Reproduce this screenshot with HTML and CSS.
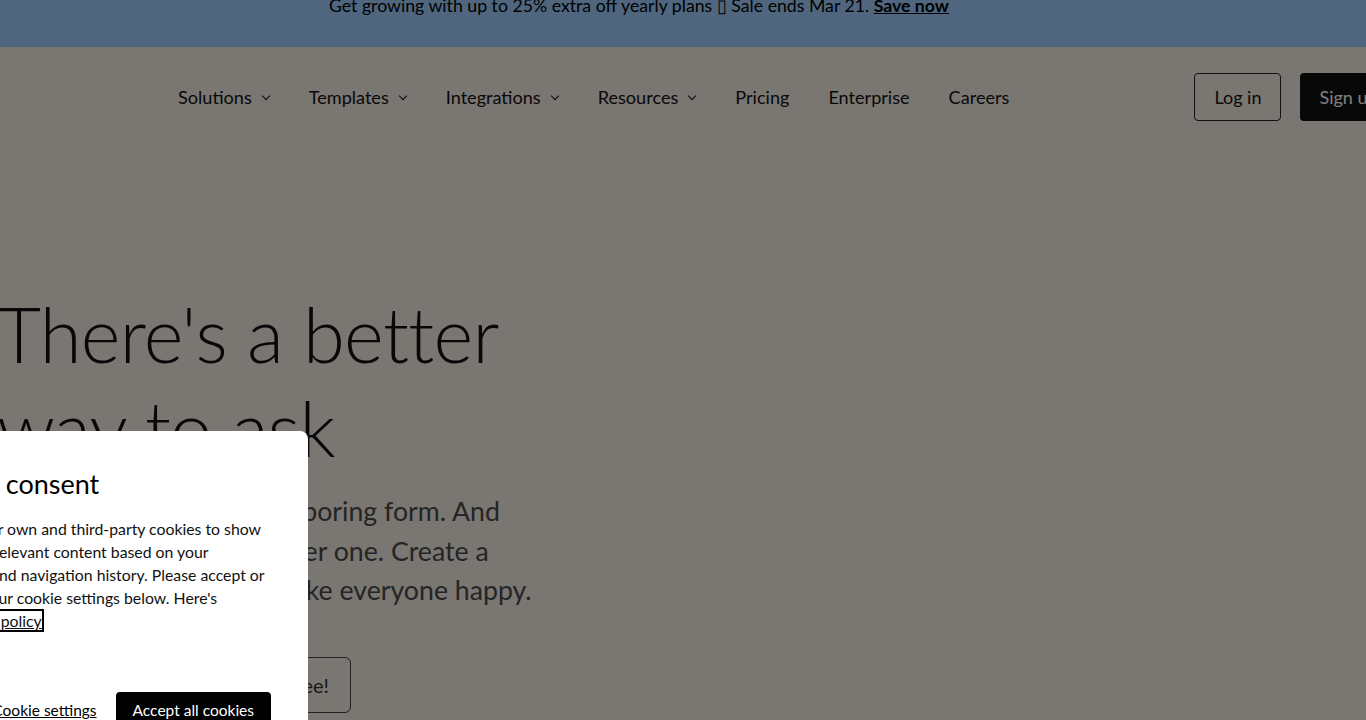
FILE: index.html
```html
<!DOCTYPE html>
<html lang="en">
<head>
    <meta charset="UTF-8">
    <meta name="viewport" content="width=device-width, initial-scale=1.0">
    <title>Typeform</title>
    <link rel="stylesheet" href="styles.css">
</head>
<body>
    <div class="promo">
        <p>Get growing with up to 25% extra off yearly plans &#x25AF; Sale ends Mar 21. <a href="#">Save now</a></p>
    </div>

    <header class="nav">
        <ul class="nav-links">
            <li>Solutions <span class="chevron"></span></li>
            <li>Templates <span class="chevron"></span></li>
            <li>Integrations <span class="chevron"></span></li>
            <li>Resources <span class="chevron"></span></li>
            <li>Pricing</li>
            <li>Enterprise</li>
            <li>Careers</li>
        </ul>
        <div class="nav-actions">
            <a class="btn btn-outline" href="#">Log in</a>
            <a class="btn btn-dark" href="#">Sign up</a>
        </div>
    </header>

    <main class="hero">
        <h1>There's a better way to ask</h1>
        <p>You don't want to make a boring form. And your audience won't answer one. Create a typeform instead&mdash;and make everyone happy.</p>
        <a class="btn btn-hero" href="#">Get started&mdash;it's free!</a>
    </main>

    <div class="backdrop"></div>

    <section class="cookie">
        <h2>Cookie consent</h2>
        <p>We use our own and third-party cookies to show you more relevant content based on your browsing and navigation history. Please accept or manage your cookie settings below. Here's <a class="policy-link" href="#">our cookie policy</a></p>
        <div class="cookie-actions">
            <a class="cookie-settings" href="#">Cookie settings</a>
            <button class="cookie-accept">Accept all cookies</button>
        </div>
    </section>
</body>
</html>
```
FILE: styles.css
```css
body {
    margin: 0;
    font-family: 'Lato', 'Helvetica', sans-serif;
    background-color: #f4ece4;
    color: #000;
    overflow: hidden;
    height: 720px;
}

a {
    color: inherit;
}

.promo {
    height: 47px;
    background-color: #9ecdfd;
    text-align: center;
    padding-right: 88px;
    font-size: 17.7px;
    overflow: hidden;
}

.promo p {
    margin: -6px 0 0;
    line-height: 24px;
}

.promo a {
    font-weight: bold;
}

.nav {
    display: flex;
    align-items: center;
    height: 100px;
    padding-left: 178px;
    width: 1440px;
}

.nav-links {
    display: flex;
    gap: 39px;
    list-style: none;
    margin: 0;
    padding: 0;
    font-size: 18.1px;
    color: #111;
}

.nav-links li {
    display: flex;
    align-items: center;
}

.chevron {
    width: 5px;
    height: 5px;
    border-right: 1.5px solid #111;
    border-bottom: 1.5px solid #111;
    transform: rotate(45deg);
    margin: -3px 1px 0 11px;
}

.nav-actions {
    display: flex;
    gap: 19px;
    margin-left: 185px;
}

.btn {
    display: inline-flex;
    align-items: center;
    text-decoration: none;
    font-size: 18px;
    border-radius: 4px;
    height: 48px;
    box-sizing: border-box;
    padding: 0 19px;
}

.btn-outline {
    border: 1px solid #222;
    color: #111;
}

.btn-dark {
    background-color: #111;
    color: #fff;
}

.hero {
    padding-top: 140px;
}

.hero h1 {
    margin: 0 0 0 -3px;
    font-weight: 300;
    font-size: 76px;
    line-height: 94px;
    letter-spacing: -0.7px;
    width: 560px;
    color: #111;
}

.hero p {
    margin: 17px 0 0;
    font-size: 26.7px;
    line-height: 39.5px;
    width: 548px;
    color: #4a4a4a;
}

.btn-hero {
    margin: 46px 0 0 0;
    height: 56px;
    width: 351px;
    justify-content: flex-end;
    padding: 0 21px;
    border: 1px solid #444;
    border-radius: 6px;
    font-size: 20px;
    color: #333;
}

.backdrop {
    position: fixed;
    inset: 0;
    background-color: rgba(0, 0, 0, 0.5);
}

.cookie {
    position: fixed;
    left: -120px;
    top: 431px;
    width: 428px;
    height: 330px;
    box-sizing: border-box;
    padding: 37px 40px 0 44px;
    background-color: #fff;
    border-radius: 8px;
}

.cookie h2 {
    margin: 0 0 0 -8px;
    font-weight: 400;
    font-size: 27px;
    line-height: 32px;
}

.cookie p {
    margin: 17px 0 0;
    font-size: 15.8px;
    line-height: 23px;
    color: #111;
}

/* lien avec le focus clavier */
.policy-link {
    white-space: nowrap;
    outline: 2px solid #000;
}

.cookie-actions {
    display: flex;
    align-items: center;
    justify-content: flex-end;
    gap: 19px;
    margin: 60px -3px 0 0;
}

.cookie-settings {
    font-size: 15.5px;
}

.cookie-accept {
    background-color: #000;
    color: #fff;
    border: none;
    border-radius: 4px;
    height: 36px;
    padding: 0 17px;
    font-family: inherit;
    font-size: 15.5px;
}
```
